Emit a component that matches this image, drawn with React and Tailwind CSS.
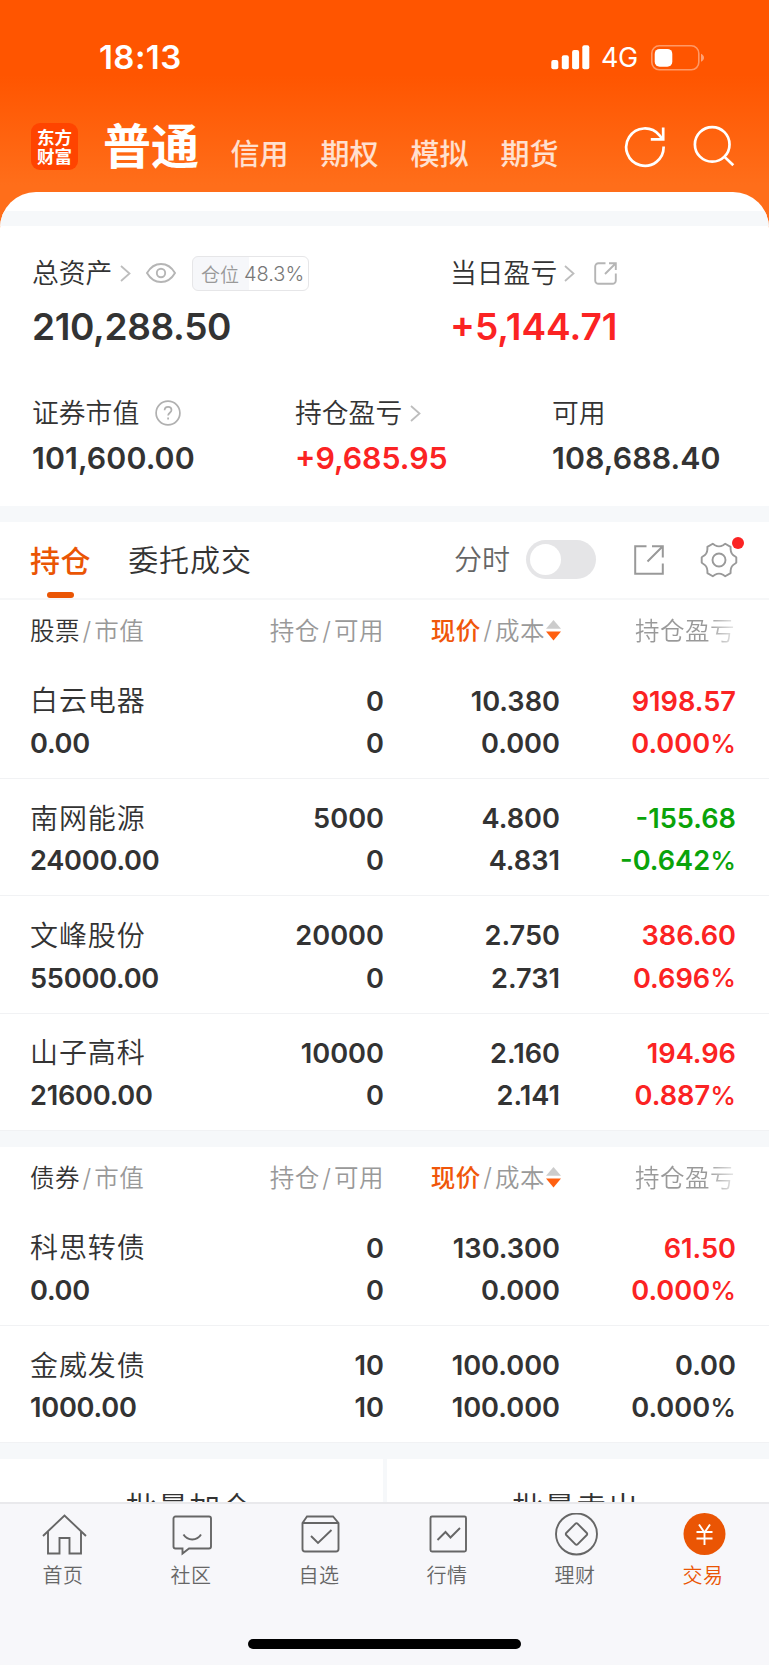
import clsx from 'clsx';

const ACCOUNT_TABS = ['信用', '期权', '模拟', '期货'];

const STOCKS = [
  { name: '白云电器', value: '0.00', held: '0', usable: '0', price: '10.380', cost: '0.000', profit: '9198.57', rate: '0.000%', trend: 'up' },
  { name: '南网能源', value: '24000.00', held: '5000', usable: '0', price: '4.800', cost: '4.831', profit: '-155.68', rate: '-0.642%', trend: 'down' },
  { name: '文峰股份', value: '55000.00', held: '20000', usable: '0', price: '2.750', cost: '2.731', profit: '386.60', rate: '0.696%', trend: 'up' },
  { name: '山子高科', value: '21600.00', held: '10000', usable: '0', price: '2.160', cost: '2.141', profit: '194.96', rate: '0.887%', trend: 'up' },
];

const BONDS = [
  { name: '科思转债', value: '0.00', held: '0', usable: '0', price: '130.300', cost: '0.000', profit: '61.50', rate: '0.000%', trend: 'up' },
  { name: '金威发债', value: '1000.00', held: '10', usable: '10', price: '100.000', cost: '100.000', profit: '0.00', rate: '0.000%', trend: 'flat' },
];

const TREND_COLORS = {
  up: 'text-[#fb2323]',
  down: 'text-[#0aa30a]',
  flat: 'text-[#333333]',
};

function StatusBar() {
  return (
    <div className="flex h-[115px] items-center pl-[99px] pr-[64px] font-[Inter]">
      <span className="text-[33px] font-semibold leading-none tracking-[0.4px]">18:13</span>
      <div className="ml-auto flex items-center">
        <svg width="39" height="25" viewBox="0 0 39 25" fill="currentColor">
          <rect x="0.3" y="15" width="7" height="9.3" rx="2" />
          <rect x="10.8" y="10.3" width="7" height="14" rx="2" />
          <rect x="21.1" y="5" width="7" height="19.3" rx="2" />
          <rect x="31.3" y="0.2" width="7" height="24.1" rx="2" />
        </svg>
        <span className="ml-[11px] w-[38px] text-[27px] font-normal leading-none tracking-[-0.5px]">4G</span>
        <svg width="54" height="26" viewBox="0 0 54 26" className="ml-[12px]">
          <rect x="0.8" y="0.8" width="47" height="24" rx="7.5" fill="none" stroke="#fff" strokeOpacity="0.4" strokeWidth="1.6" />
          <rect x="3.7" y="3.9" width="17.6" height="17.8" rx="5" fill="#fff" />
          <path d="M50 8.8c1.9.8 3 2.3 3 4s-1.1 3.2-3 4z" fill="#fff" fillOpacity="0.45" />
        </svg>
      </div>
    </div>
  );
}

function AccountHeader() {
  return (
    <div className="flex h-[77px] pl-[31px]">
      <div className="mt-2 flex h-[47px] w-[47px] items-center justify-center rounded-[9px] bg-[#ff4400]">
        <p className="-mt-[2px] w-[35px] text-[17.5px] font-bold leading-[19px]">东方<br />财富</p>
      </div>
      <h1 className="ml-[25px] mt-1 text-[48px] font-bold leading-[48px]">普通</h1>
      <nav className="ml-[31.5px] mt-[22px] flex gap-[32px] text-[29px] font-medium leading-[30px] text-white/80">
        {ACCOUNT_TABS.map((tab) => (
          <span key={tab} className="w-[58px] whitespace-nowrap">{tab}</span>
        ))}
      </nav>
      <svg width="42" height="42" viewBox="0 0 42 42" fill="none" stroke="#fff" strokeWidth="2.7" className="ml-auto mt-[11px]">
        <path d="M39.6 20.5A18.7 18.7 0 1 1 35.3 9.2L38.5 13" />
        <path d="M39.2 1.5V13.4H26.8" />
      </svg>
      <svg width="42" height="42" viewBox="0 0 42 42" fill="none" stroke="#fff" strokeWidth="2.7" className="ml-[27px] mr-[34px] mt-[10px]">
        <circle cx="19.2" cy="19.4" r="17.3" />
        <path d="M31.3 31.6L40.3 40.3" />
      </svg>
    </div>
  );
}

function Chevron({ className }) {
  return (
    <svg width="11" height="17" viewBox="0 0 11 17" fill="none" stroke="#bdbdbd" strokeWidth="1.8" className={className}>
      <path d="M1 1l8.5 7.5L1 16" />
    </svg>
  );
}

function Stat({ label, value, large, up, children }) {
  return (
    <div>
      <div className="flex h-10 items-center text-[26.8px] leading-none text-[#333333]">
        <span className="-mt-px">{label}</span>
        {children}
      </div>
      <div
        className={clsx(
          'flex items-center font-[Inter] font-semibold leading-none',
          large ? 'mt-[13px] h-10 text-[37px]' : 'mt-px h-12 text-[30.3px]',
          large && !up && 'tracking-[-0.35px]',
          !large && !up && 'tracking-[0.1px]',
          up ? 'text-[#fb2323]' : 'text-[#333333]',
        )}
      >
        {value}
      </div>
    </div>
  );
}

function Summary() {
  return (
    <section className="h-[280px] pl-8 pt-[27px]">
      <div className="flex">
        <div className="w-[418px]">
          <Stat label="总资产" value="210,288.50" large>
            <Chevron className="ml-[8px]" />
            <svg width="30" height="20" viewBox="0 0 30 20" fill="none" stroke="#b5b5b5" strokeWidth="1.9" className="ml-[15px]">
              <path d="M1 10C4.5 4 9.4 1 15 1s10.5 3 14 9c-3.5 6-8.4 9-14 9S4.5 16 1 10z" />
              <circle cx="15" cy="10" r="4.2" />
            </svg>
            <div className="ml-[16px] flex h-[35px] w-[117px] items-center whitespace-nowrap rounded-md border border-[#e6e6e8] bg-[linear-gradient(90deg,#f6f7fa_48.3%,#ffffff_48.3%)] pl-[7.5px] text-[19px] text-[#999999]">
              <span>仓位</span>
              <span className="ml-[5px] mt-px font-[Inter] text-[20px] text-[#777777]">48.3%</span>
            </div>
          </Stat>
        </div>
        <Stat label="当日盈亏" value="+5,144.71" large up>
          <Chevron className="ml-[7px]" />
          <svg width="23" height="23" viewBox="0 0 23 23" fill="none" stroke="#b5b5b5" strokeWidth="1.9" className="ml-[18.5px]">
            <path d="M11.5 1.2H4.5A3.3 3.3 0 0 0 1.2 4.5v14a3.3 3.3 0 0 0 3.3 3.3h14a3.3 3.3 0 0 0 3.3-3.3v-7" />
            <path d="M11 12L21.5 1.5M15 1.2h6.8V8" />
          </svg>
        </Stat>
      </div>
      <div className="mt-[47px] flex">
        <div className="w-[263px]">
          <Stat label="证券市值" value="101,600.00">
            <svg width="26" height="26" viewBox="0 0 26 26" fill="none" stroke="#b0b0b0" strokeWidth="1.7" className="ml-[16px]">
              <circle cx="13" cy="13" r="11.9" />
              <path d="M9.6 10.3c0-2.1 1.5-3.4 3.5-3.4s3.4 1.3 3.4 3.2c0 2.6-3.4 2.7-3.4 5.5M13.1 17.6v2" />
            </svg>
          </Stat>
        </div>
        <div className="w-[257px]">
          <Stat label="持仓盈亏" value="+9,685.95" up>
            <Chevron className="ml-[8px]" />
          </Stat>
        </div>
        <Stat label="可用" value="108,688.40" />
      </div>
    </section>
  );
}

function PositionTabs() {
  return (
    <div className="flex h-[78px] items-center border-b-2 border-[#f6f7f8] pl-[30px] pr-[31px] text-[30px] leading-none tracking-[0.6px] text-[#333333]">
      <div className="flex h-full flex-col items-center">
        <span className="mt-[22px] font-medium text-[#ea5504]">持仓</span>
        <span className="mt-auto h-1.5 w-[27px] rounded-[3px] bg-[#ea5504]" />
      </div>
      <span className="-mt-[3px] ml-[37px] tracking-[0.9px]">委托成交</span>
      <span className="-mt-[3px] ml-auto text-[28px] tracking-normal text-[#666666]">分时</span>
      <span className="ml-4 flex h-[39px] w-[70px] items-center rounded-full bg-[#e5e5e7] pl-1">
        <span className="h-[31px] w-[31px] rounded-full bg-white" />
      </span>
      <svg width="30" height="30" viewBox="0 0 30 30" fill="none" stroke="#999999" strokeWidth="2" className="ml-[38px]">
        <path d="M12.5 1.2H1.2v27.6h27.6V18.5" />
        <path d="M13.5 16.5L28.5 1.5M18 1.2h10.8v11.3" />
      </svg>
      <div className="relative ml-[36px]">
        <svg width="38" height="38" viewBox="0 0 38 38" fill="none" stroke="#999999" strokeWidth="1.9" strokeLinejoin="round">
          <path d="M15 4.2Q19 6.6 23 4.2L25.2 2.7L30.6 5.9V8.2Q30.8 13.3 35.3 15.5L36.3 16.4V21.6L35.3 22.5Q30.8 24.7 30.6 29.8V32.1L25.2 35.3L23 33.8Q19 31.4 15 33.8L12.8 35.3L7.4 32.1V29.8Q7.2 24.7 2.7 22.5L1.7 21.6V16.4L2.7 15.5Q7.2 13.3 7.4 8.2V5.9L12.8 2.7Z" />
          <circle cx="19" cy="19" r="6.5" />
        </svg>
        <span className="absolute -right-[6px] -top-[4px] h-3 w-3 rounded-full bg-[#fb2323]" />
      </div>
    </div>
  );
}

function Slash() {
  return <span className="mx-[2.5px] inline-block font-[Inter] text-[25px]">/</span>;
}

function TableHeader({ kind }) {
  return (
    <div className="flex h-[62px] items-center pl-[30px] pr-[34px] text-[24.5px] leading-none tracking-[0.5px] text-[#999999]">
      <div className="w-[170px] whitespace-nowrap">
        <span className="text-[#333333]">{kind}</span>
        <Slash />
        市值
      </div>
      <div className="w-[184px] text-right">
        持仓
        <Slash />
        可用
      </div>
      <div className="flex w-[177px] items-center justify-end">
        <span className="font-medium text-[#f0560a]">现价</span>
        <Slash />
        成本
        <svg width="15" height="21" viewBox="0 0 15 21" className="ml-px">
          <path d="M7.5 0L15 8.7H0z" fill="#cccccc" />
          <path d="M7.5 20.5L15 11.5H0z" fill="#ff6010" />
        </svg>
      </div>
      <div className="ml-auto bg-[linear-gradient(90deg,#999999_72%,#e8e8e8_100%)] bg-clip-text text-transparent">持仓盈亏</div>
    </div>
  );
}

function Amount({ children, className }) {
  const percent = children.endsWith('%');
  return (
    <span className={clsx('flex h-[42.3px] items-center justify-end font-[Inter] text-[27.2px] font-semibold', className)}>
      {percent ? children.slice(0, -1) : children}
      {percent && <span className="text-[26px] font-medium">%</span>}
    </span>
  );
}

function HoldingRow({ item }) {
  return (
    <div className="flex h-[117.3px] border-b border-[#f1f2f4] pl-[30px] pr-[33px] pt-[18.5px] text-[28px] leading-none text-[#333333]">
      <div className="flex w-[170px] flex-col items-start">
        <span className="flex h-[42.3px] items-center pb-1 tracking-[0.9px]">{item.name}</span>
        <Amount className="tracking-[-0.25px]">{item.value}</Amount>
      </div>
      <div className="w-[184px]">
        <Amount>{item.held}</Amount>
        <Amount>{item.usable}</Amount>
      </div>
      <div className="w-[176px]">
        <Amount>{item.price}</Amount>
        <Amount>{item.cost}</Amount>
      </div>
      <div className={clsx('ml-auto', TREND_COLORS[item.trend])}>
        <Amount>{item.profit}</Amount>
        <Amount>{item.rate}</Amount>
      </div>
    </div>
  );
}

function Holdings({ kind, items }) {
  return (
    <section>
      <TableHeader kind={kind} />
      {items.map((item) => (
        <HoldingRow key={item.name} item={item} />
      ))}
    </section>
  );
}

function Divider() {
  return <div className="h-[15.7px] bg-[#f6f8fa]" />;
}

const NAV_ITEMS = [
  {
    label: '首页',
    icon: (
      <>
        <path d="M1 23L22.5 2.5L44 23" />
        <path d="M6 19v21.5h11.5V25h10v15.5H39V19" />
      </>
    ),
  },
  {
    label: '社区',
    icon: (
      <>
        <path d="M5.5 3.5h33.5a2 2 0 0 1 2 2v28a2 2 0 0 1-2 2H19L12.5 40.5V35.5h-7a2 2 0 0 1-2-2v-28a2 2 0 0 1 2-2z" />
        <path d="M13.5 21.5c4 6.6 13.5 6.6 17.5 0" />
      </>
    ),
  },
  {
    label: '自选',
    icon: (
      <>
        <path d="M9 3.5h26l5.5 6.5v26a2.5 2.5 0 0 1-2.5 2.5H7A2.5 2.5 0 0 1 4.5 36V10z" />
        <path d="M4.5 10h36M13 23l7 7L33.5 17" />
      </>
    ),
  },
  {
    label: '行情',
    icon: (
      <>
        <rect x="4.5" y="3.5" width="35.5" height="35" rx="1.5" />
        <path d="M11.5 27l8-8 5 5.5L34 15" />
      </>
    ),
  },
  {
    label: '理财',
    icon: (
      <>
        <circle cx="22.5" cy="21" r="20.5" />
        <path d="M21.5 10.7a1.4 1.4 0 0 1 2 0l9.3 9.3a1.4 1.4 0 0 1 0 2l-9.3 9.3a1.4 1.4 0 0 1-2 0L12.2 22a1.4 1.4 0 0 1 0-2z" />
      </>
    ),
  },
  {
    label: '交易',
    active: true,
    icon: (
      <>
        <circle cx="22.5" cy="21" r="21" fill="#ea5504" stroke="none" />
        <path d="M17 11.5l5.5 8 5.5-8M22.5 19.5V32M14.5 19h16M14.5 25.5h16" stroke="#fff" />
      </>
    ),
  },
];

function BottomNav() {
  return (
    <footer className="flex h-[163px] flex-col border-t-2 border-[#e9e9ec] bg-[#f7f7fa]">
      <nav className="flex pr-px pt-[9px]">
        {NAV_ITEMS.map(({ label, icon, active }) => (
          <div
            key={label}
            className={clsx('flex flex-1 flex-col items-center text-[20px] leading-[22px] tracking-[0.5px]', active ? 'text-[#ea5504]' : 'text-[#666666]')}
          >
            <svg width="45" height="43" viewBox="0 0 45 43" fill="none" stroke="currentColor" strokeWidth="1.9">
              {icon}
            </svg>
            <span className="mr-[2px] mt-[8px]">{label}</span>
          </div>
        ))}
      </nav>
      <div className="mx-auto mb-[16px] mt-auto h-[10px] w-[273px] rounded-full bg-black" />
    </footer>
  );
}

export default function App() {
  return (
    <div className="flex h-[1665px] w-[769px] flex-col overflow-hidden bg-[linear-gradient(180deg,#ff5500_0px,#ff5500_75px,#ff6e1a_185px,#ff6e1a_240px)] font-['Noto_Sans_CJK_SC',sans-serif] font-[350]">
      <header className="text-white">
        <StatusBar />
        <AccountHeader />
      </header>
      <main className="min-h-0 flex-1 overflow-hidden rounded-t-[36px] bg-white pt-[19px]">
        <div className="h-[15px] bg-[#f6f8fa]" />
        <Summary />
        <Divider />
        <PositionTabs />
        <Holdings kind="股票" items={STOCKS} />
        <Divider />
        <Holdings kind="债券" items={BONDS} />
        <Divider />
        <div className="flex h-[44px] gap-1 overflow-hidden bg-[#f6f8fa] text-[31px] leading-[31px] tracking-[0.8px] text-[#333333]">
          <div className="flex-1 bg-white pr-1 pt-[31px] text-center">批量加仓</div>
          <div className="flex-1 bg-white pr-1 pt-[31px] text-center">批量卖出</div>
        </div>
      </main>
      <BottomNav />
    </div>
  );
}
